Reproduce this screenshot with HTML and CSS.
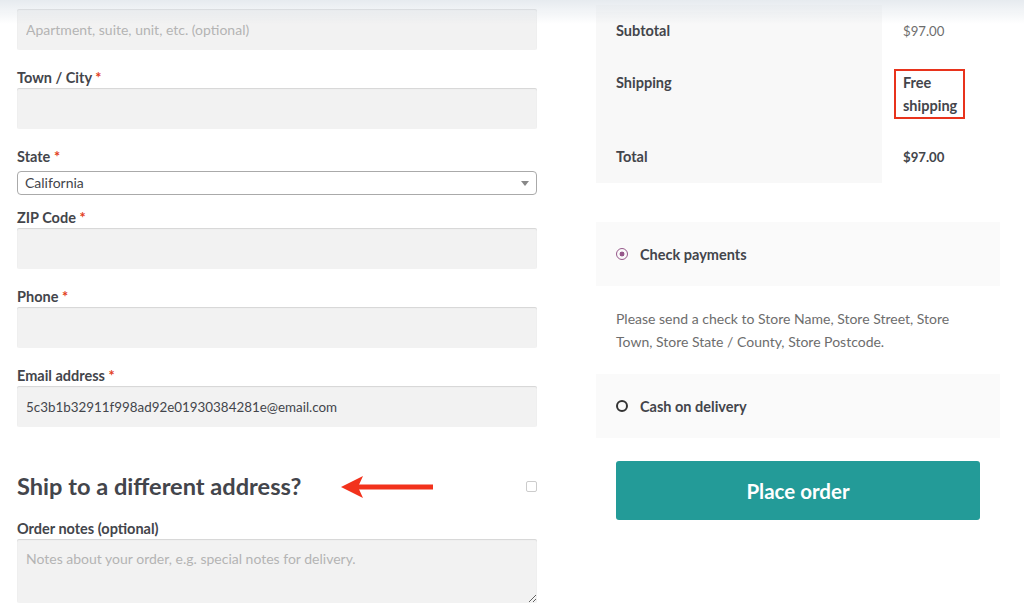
FILE: index.html
```html
<!DOCTYPE html>
<html>
<head>
	<meta charset="utf-8">
	<title>Checkout</title>
	<link rel="stylesheet" href="styles.css">
</head>
<body>
<div class="checkout">
	<div class="billing">
		<div class="field first">
			<input class="text" type="text" placeholder="Apartment, suite, unit, etc. (optional)">
		</div>
		<div class="field">
			<label>Town / City <abbr>*</abbr></label>
			<input class="text" type="text">
		</div>
		<div class="field select-field">
			<label>State <abbr>*</abbr></label>
			<div class="select"><span>California</span><i class="caret"></i></div>
		</div>
		<div class="field">
			<label>ZIP Code <abbr>*</abbr></label>
			<input class="text" type="text">
		</div>
		<div class="field">
			<label>Phone <abbr>*</abbr></label>
			<input class="text" type="text">
		</div>
		<div class="field">
			<label>Email address <abbr>*</abbr></label>
			<input class="text email" type="text" value="5c3b1b32911f998ad92e01930384281e@email.com">
		</div>

		<h3 class="ship">
			<span>Ship to a different address?</span>
			<svg class="arrow" width="96" height="24" viewBox="0 0 96 24"><polygon points="0,12 22,1 17,12 22,23" fill="#f2321c"/><rect x="16" y="9.5" width="76" height="5" fill="#f2321c"/></svg>
			<i class="check"></i>
		</h3>

		<div class="field">
			<label>Order notes (optional)</label>
			<div class="notes">
				<textarea placeholder="Notes about your order, e.g. special notes for delivery."></textarea>
			</div>
		</div>
	</div>

	<div class="review">
		<table class="totals">
			<tr><th>Subtotal</th><td><span class="amount">$97.00</span></td></tr>
			<tr><th>Shipping</th><td><strong class="free">Free shipping</strong></td></tr>
			<tr><th>Total</th><td><strong class="amount">$97.00</strong></td></tr>
		</table>

		<ul class="methods">
			<li class="method"><i class="radio on"></i>Check payments</li>
			<li class="desc">Please send a check to Store Name, Store Street, Store Town, Store State / County, Store Postcode.</li>
			<li class="method"><i class="radio"></i>Cash on delivery</li>
		</ul>

		<div class="place"><button>Place order</button></div>
	</div>
</div>
</body>
</html>
```
FILE: styles.css
```css
html,body{margin:0;padding:0;overflow:hidden;}
body{background:#fff;color:#6d6d6d;font:14px/23px "Lato","Noto Sans",sans-serif;}
body:before{content:"";position:fixed;left:0;top:0;right:0;height:24px;background:linear-gradient(rgba(222,228,234,.75),rgba(255,255,255,0));z-index:5;}
ul{margin:0;padding:0;list-style:none;}

.checkout{display:flex;gap:59px;padding:0 0 0 17px;}
.billing{width:520px;padding-top:9px;}
.review{width:404px;padding-top:5px;}

.field{margin-bottom:17px;}
.field label{display:block;font-size:14.5px;font-weight:bold;color:#43454b;line-height:21px;}
.field abbr{color:#e2401c;text-decoration:none;}
.text{display:block;box-sizing:border-box;width:100%;height:41px;margin:0;padding:0 9px;border:0;border-radius:2px;background:#f2f2f2;box-shadow:inset 0 1px 1px rgba(0,0,0,.12);font:14px "Lato","Noto Sans",sans-serif;color:#43454b;outline:none;}
.text.email{font-size:13.4px;}
.text::placeholder,textarea::placeholder{color:#b4b4b4;}

.select-field{margin-bottom:12px;}
.select{position:relative;box-sizing:border-box;height:24px;margin-top:4px;padding:0 7px;border:1px solid #aaa;border-radius:4px;background:#fff;color:#43454b;line-height:22px;}
.caret{position:absolute;right:7px;top:9px;border:4px solid transparent;border-top:5px solid #888;border-bottom:0;}

.ship{position:relative;display:flex;justify-content:space-between;align-items:center;margin:44.5px 0 17px;font-size:23.6px;line-height:29px;font-weight:bold;color:#43454b;}
.arrow{position:absolute;left:324px;top:3px;}
.check{width:9px;height:9px;border:1px solid #ccc;border-radius:2px;background:#fff;}

.notes textarea{display:block;box-sizing:border-box;width:100%;height:64px;margin:0;padding:8px 9px;border:0;border-radius:2px;background:#f2f2f2;box-shadow:inset 0 1px 1px rgba(0,0,0,.12);font:14px/23px "Lato","Noto Sans",sans-serif;color:#43454b;resize:vertical;outline:none;}

.totals{width:100%;border-collapse:collapse;font-size:14.5px;}
.totals th,.totals td{padding:14px 20px;text-align:left;vertical-align:top;}
.totals th{width:246px;background:#f8f8f8;color:#43454b;font-weight:bold;}
.totals td{padding-left:21px;}
.totals strong{color:#43454b;}
.amount{font-size:13.2px;}
.free{position:relative;display:inline-block;width:57px;}
.free:after{content:"";position:absolute;left:-9px;right:-5px;top:-2px;bottom:-2px;border:2px solid #e8331c;}

.methods{margin-top:39px;}
.method{display:flex;align-items:center;height:64px;padding:0 20px;background:#fafafa;color:#43454b;font-size:14.5px;font-weight:bold;}
.desc{padding:21px 20px;}
.radio{box-sizing:border-box;width:12px;height:12px;margin-right:12px;border:2px solid #333;border-radius:50%;}
.radio.on{width:12px;height:12px;margin-right:12px;border:1.8px solid #96588a;background:radial-gradient(circle,#96588a 0,#96588a 2.2px,transparent 2.7px);}

.place{padding:23px 20px 0;}
.place button{display:block;width:100%;height:59px;border:0;border-radius:3px;background:#239b98;color:#fff;font:bold 20.5px "Lato","Noto Sans",sans-serif;cursor:pointer;}
```
